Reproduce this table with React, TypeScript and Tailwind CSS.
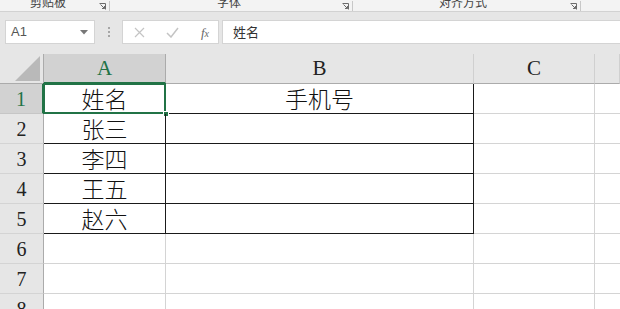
import React from "react";

const cjk = { fontFamily: '"Noto Sans CJK SC", "Noto Sans", sans-serif' };
const serif = { fontFamily: '"Liberation Serif", "DejaVu Serif", serif' };

const rows = [
  ["姓名", "手机号"],
  ["张三", ""],
  ["李四", ""],
  ["王五", ""],
  ["赵六", ""],
  ["", ""],
  ["", ""],
  ["", ""],
];

const Launcher = () => (
  <svg width="7" height="7" viewBox="0 0 7 7" className="shrink-0">
    <path d="M0.5 0.5h6v6" fill="none" stroke="#6b6b6b" strokeWidth="1" />
    <path d="M1.5 1.5l4 4M3 5.5h2.5V3" fill="none" stroke="#6b6b6b" strokeWidth="1" />
  </svg>
);

const RibbonGroup = ({ label, width, center }: { label: string; width: number; center: number }) => (
  <div className="relative h-full shrink-0" style={{ width }}>
    <span
      className="absolute top-[-5px] text-[12px] leading-[14px] text-[#444] -translate-x-1/2 whitespace-nowrap"
      style={{ ...cjk, left: center }}
    >
      {label}
    </span>
    <div className="absolute right-[3px] top-[1px] flex items-center gap-[3px]">
      <Launcher />
      <div className="w-px h-[10px] bg-[#c8c8c8]" />
    </div>
  </div>
);

export default function App() {
  return (
    <div className="w-[620px] h-[309px] overflow-hidden bg-[#e6e6e6] select-none">
      {/* ribbon group labels */}
      <div className="h-[12px] bg-[#f3f3f3] border-b border-[#d2d2d2] flex overflow-hidden">
        <RibbonGroup label="剪贴板" width={113} center={48} />
        <RibbonGroup label="字体" width={243} center={116} />
        <RibbonGroup label="对齐方式" width={228} center={107} />
      </div>

      {/* formula bar */}
      <div className="h-[42px] flex items-start pt-[8px]">
        <div className="ml-[5px] w-[90px] h-[24px] bg-white border border-[#d4d4d4] flex items-center justify-between pl-[5px] pr-[6px]">
          <span className="text-[13px] text-[#555]" style={{ fontFamily: '"Liberation Sans", Arial, sans-serif' }}>
            A1
          </span>
          <svg width="8" height="5" viewBox="0 0 8 5">
            <path d="M0 0h8L4 4.5z" fill="#777" />
          </svg>
        </div>
        <div className="w-[27px] h-[24px] flex flex-col items-center justify-center gap-[2px]">
          <div className="w-[2px] h-[2px] bg-[#a6a6a6]" />
          <div className="w-[2px] h-[2px] bg-[#a6a6a6]" />
          <div className="w-[2px] h-[2px] bg-[#a6a6a6]" />
        </div>
        <div className="w-[97px] h-[24px] bg-white border border-[#d4d4d4] flex items-center justify-between pl-[11px] pr-[9px]">
          <svg width="11" height="11" viewBox="0 0 11 11">
            <path d="M1 1l9 9M10 1l-9 9" stroke="#c4c4c4" strokeWidth="1.2" />
          </svg>
          <svg width="13" height="11" viewBox="0 0 13 11">
            <path d="M1 6l4 4L12 1" fill="none" stroke="#c4c4c4" strokeWidth="1.5" />
          </svg>
          <span className="text-[13px] italic text-[#666] leading-none" style={serif}>
            f<span className="text-[10px]">x</span>
          </span>
        </div>
        <div className="ml-[3px] flex-1 h-[24px] bg-white border border-[#d4d4d4] border-r-0 flex items-center pl-[10px]">
          <span className="text-[13px] text-[#333]" style={cjk}>
            姓名
          </span>
        </div>
      </div>

      {/* sheet */}
      <div className="grid grid-cols-[44px_122px_308px_121px_1fr] bg-white">
        {/* header row */}
        <div className="h-[30px] bg-[#e6e6e6] border-r border-b border-[#ababab] relative">
          <svg width="26" height="25" viewBox="0 0 26 25" className="absolute right-[2px] bottom-[2px]">
            <path d="M25 0V25H0z" fill="#b9b9b9" />
          </svg>
        </div>
        <div
          className="h-[30px] bg-[#d2d2d2] border-r border-[#ababab] border-b-2 border-b-[#217346] flex items-center justify-center text-[21px] leading-none text-[#217346]"
          style={serif}
        >
          A
        </div>
        {["B", "C", ""].map((c, i) => (
          <div
            key={i}
            className="h-[30px] bg-[#e6e6e6] border-r border-b border-r-[#d0d0d0] border-b-[#ababab] flex items-center justify-center text-[21px] leading-none text-[#222]"
            style={serif}
          >
            {c}
          </div>
        ))}

        {rows.map((r, idx) => {
          const n = idx + 1;
          const inTable = n <= 5;
          const sel = n === 1;
          return (
            <React.Fragment key={n}>
              <div
                className={
                  "h-[30px] border-b flex items-center justify-center text-[20px] leading-none " +
                  (sel
                    ? "bg-[#d2d2d2] text-[#217346] border-b-[#c6c6c6] border-r-2 border-r-[#217346]"
                    : "bg-[#e6e6e6] text-[#222] border-b-[#d4d4d4] border-r border-r-[#ababab]")
                }
                style={serif}
              >
                {n}
              </div>
              <div
                className={
                  "h-[30px] relative flex items-center justify-center text-[23px] leading-none font-light text-[#111] border-r border-b " +
                  (inTable ? "border-[#1a1a1a]" : "border-[#d4d4d4]")
                }
                style={cjk}
              >
                {r[0]}
                {sel && (
                  <>
                    <div className="absolute left-[-1px] top-[-1px] right-[-1px] bottom-[-1px] border-2 border-[#217346]" />
                    <div className="absolute right-[-4px] bottom-[-4px] w-[6px] h-[6px] bg-[#217346] border border-white" />
                  </>
                )}
              </div>
              <div
                className={
                  "h-[30px] flex items-center justify-center text-[23px] leading-none font-light text-[#111] border-r border-b " +
                  (inTable ? "border-[#1a1a1a]" : "border-[#d4d4d4]")
                }
                style={cjk}
              >
                {r[1]}
              </div>
              <div className="h-[30px] border-r border-b border-[#d4d4d4]" />
              <div className="h-[30px] border-b border-[#d4d4d4]" />
            </React.Fragment>
          );
        })}
      </div>
    </div>
  );
}
